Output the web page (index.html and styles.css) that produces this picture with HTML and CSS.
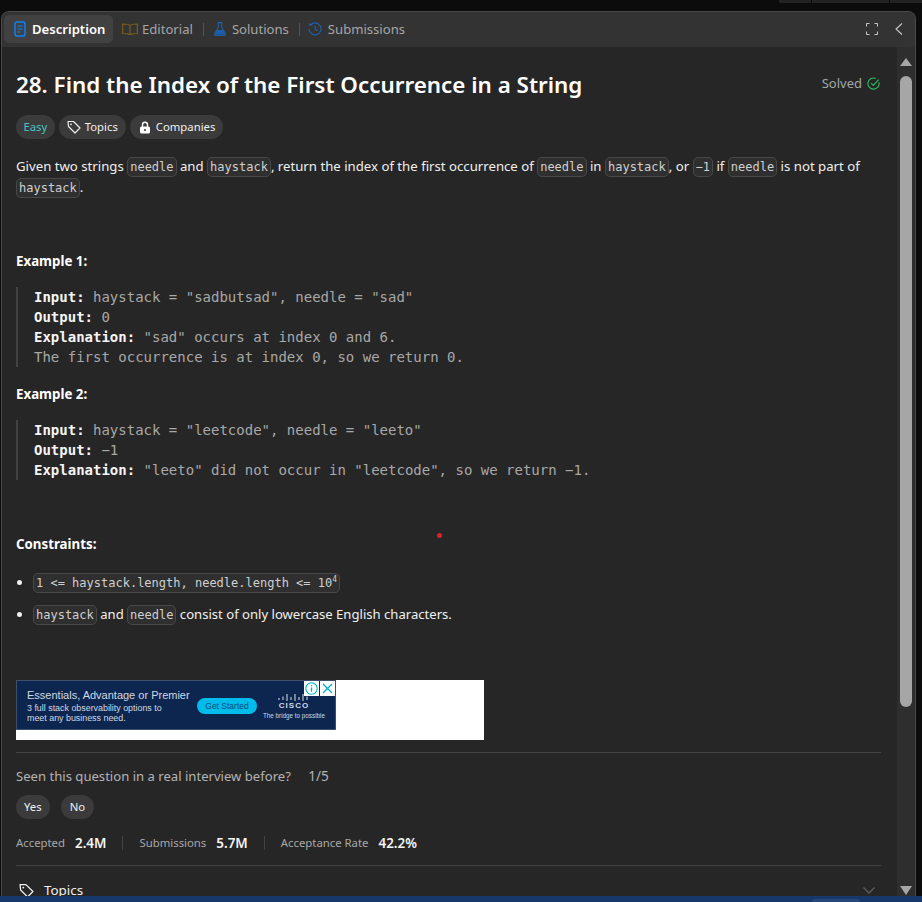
FILE: index.html
```html
<!DOCTYPE html>
<html lang="en">
<head>
    <meta charset="UTF-8">
    <meta name="viewport" content="width=device-width, initial-scale=1.0">
    <title>Find the Index of the First Occurrence in a String</title>
    <link rel="stylesheet" href="styles.css">
</head>
<body>
    <div class="top-strip"><i></i><i></i><i></i></div>
    <div class="panel">
        <div class="tabs">
            <div class="tab tab-active">
                <svg class="icon" viewBox="0 0 12 16" width="12" height="16"><rect x="1" y="1" width="10" height="14" rx="2" fill="none" stroke="#0a84ff" stroke-width="1.4"/><path d="M3.5 5h5M3.5 8h5M3.5 11h3" stroke="#0a84ff" stroke-width="1.2"/></svg>
                <span>Description</span>
            </div>
            <div class="tab tab-editorial">
                <svg class="icon" viewBox="0 0 16 12" width="16" height="12"><path d="M8 2.5C6.5 1.2 3.5 1 .7 1v9.5c2.8 0 5.8.2 7.3 1.2 1.5-1 4.5-1.200 7.300-1.200V1C12.500 1 9.500 1.200 8 2.500zM8 2.500v9" fill="none" stroke="#7a5f1a" stroke-width="1.2"/></svg>
                <span>Editorial</span>
            </div>
            <i class="tab-sep"></i>
            <div class="tab">
                <svg class="icon" viewBox="0 0 12 14" width="12" height="14"><path d="M3.500.7h5M4.300.7v4.500L.8 11.500c-.5 1 .1 1.900 1.200 1.900h8c1.100 0 1.700-.9 1.200-1.900L7.700 5.200V.7" fill="none" stroke="#1d5fa8" stroke-width="1.200"/><path d="M3 8h6l2 4.500H1z" fill="#1d5fa8"/></svg>
                <span>Solutions</span>
            </div>
            <i class="tab-sep"></i>
            <div class="tab tab-submissions">
                <svg class="icon" viewBox="0 0 14 14" width="14" height="14"><path d="M2.400 3A6 6 0 1 1 1 7M.9 1.200l1.300 2.200 2.300-.7M7.200 3.800v3.500l2.300 1.400" fill="none" stroke="#1d5fa8" stroke-width="1.200"/></svg>
                <span>Submissions</span>
            </div>
            <div class="tabs-right">
                <svg viewBox="0 0 12 12" width="12" height="12"><path d="M.5 3.500v-3h3M8.500.5h3v3M11.500 8.500v3h-3M3.500 11.500h-3v-3" fill="none" stroke="#c8c8c8" stroke-width="1"/></svg>
                <svg viewBox="0 0 8 12" width="8" height="12"><path d="M7 .5L1 6l6 5.500" fill="none" stroke="#c8c8c8" stroke-width="1.100"/></svg>
            </div>
        </div>

        <div class="main">
            <div class="content">
                <div class="title-row">
                    <h1>28. Find the Index of the First Occurrence in a String</h1>
                    <div class="solved">Solved
                        <svg viewBox="0 0 14 14" width="13" height="13"><path d="M12.800 5.500A6 6 0 1 1 9.500 1.600" fill="none" stroke="#2cbb5d" stroke-width="1.200"/><path d="M4.500 6.500L6.800 9 12.500 2.800" fill="none" stroke="#2cbb5d" stroke-width="1.200"/></svg>
                    </div>
                </div>

                <div class="tags">
                    <div class="tag tag-easy">Easy</div>
                    <div class="tag">
                        <svg viewBox="0 0 14 14" width="14" height="14"><path d="M1 1.500h5.500l6.500 6.500-5 5L1.500 6.500z" fill="none" stroke="#eee" stroke-width="1.200" stroke-linejoin="round"/><circle cx="4" cy="4.300" r=".9" fill="#eee"/></svg>
                        Topics
                    </div>
                    <div class="tag tag-companies">
                        <svg viewBox="0 0 12 13" width="12" height="13"><path d="M3.500 6V3.800a2.500 2.500 0 0 1 5 0V6" fill="none" stroke="#fff" stroke-width="1.400"/><rect x="1" y="5.500" width="10" height="7" rx="1.500" fill="#fff"/><circle cx="6" cy="9" r="1" fill="#333"/></svg>
                        Companies
                    </div>
                </div>

                <p class="text">Given two strings <code>needle</code> and <code>haystack</code>, return the index of the first occurrence of <code>needle</code> in <code>haystack</code>, or <code>&minus;1</code> if <code>needle</code> is not part of <code>haystack</code>.</p>

                <div class="label label-first">Example 1:</div>
                <pre class="example"><b>Input:</b> haystack = "sadbutsad", needle = "sad"
<b>Output:</b> 0
<b>Explanation:</b> "sad" occurs at index 0 and 6.
The first occurrence is at index 0, so we return 0.</pre>

                <div class="label">Example 2:</div>
                <pre class="example"><b>Input:</b> haystack = "leetcode", needle = "leeto"
<b>Output:</b> &minus;1
<b>Explanation:</b> "leeto" did not occur in "leetcode", so we return &minus;1.</pre>

                <div class="label label-constraints">Constraints:</div>
                <ul class="constraints">
                    <li><code>1 &lt;= haystack.length, needle.length &lt;= 10<sup>4</sup></code></li>
                    <li><code>haystack</code> and <code>needle</code> consist of only lowercase English characters.</li>
                </ul>

                <div class="ad-slot">
                    <div class="ad">
                        <div class="ad-copy">
                            <div class="ad-head">Essentials, Advantage or Premier</div>
                            <div class="ad-sub">3 full stack observability options to<br>meet any business need.</div>
                        </div>
                        <div class="ad-btn">Get Started</div>
                        <div class="ad-logo">
                            <svg viewBox="0 0 32 9" width="32" height="9"><path d="M1 5v2M5 3.500v3.500M9 1v7M13 4v3M17 1v7M21 4v3M25 1v7M29 3.500v3.500" stroke="#d8e0ea" stroke-width="1"/></svg>
                            <div class="ad-cisco">cisco</div>
                            <div class="ad-tagline">The bridge to possible</div>
                        </div>
                        <div class="ad-close">
                            <span><svg viewBox="0 0 15 15" width="15" height="15"><circle cx="7.500" cy="7.500" r="5.700" fill="none" stroke="#00aecd" stroke-width="1.100"/><path d="M7.500 6.500v4.200M7.500 4v1.300" stroke="#00aecd" stroke-width="1.300"/></svg></span>
                            <span><svg viewBox="0 0 15 15" width="15" height="15"><path d="M3 3l9 9M12 3l-9 9" stroke="#00aecd" stroke-width="1.300"/></svg></span>
                        </div>
                    </div>
                </div>

                <hr class="rule rule-ad">

                <div class="interview">Seen this question in a real interview before? <span>1/5</span></div>
                <div class="votes">
                    <div class="tag">Yes</div>
                    <div class="tag tag-no">No</div>
                </div>

                <div class="stats">
                    <div class="stat">Accepted <b>2.4M</b></div>
                    <div class="stat">Submissions <b>5.7M</b></div>
                    <div class="stat">Acceptance Rate <b>42.2%</b></div>
                </div>

                <hr class="rule rule-stats">

                <div class="section">
                    <svg viewBox="0 0 14 14" width="15" height="15"><path d="M1 1.500h5.500l6.500 6.500-5 5L1.500 6.500z" fill="none" stroke="#eee" stroke-width="1.200" stroke-linejoin="round"/><circle cx="4" cy="4.300" r=".9" fill="#eee"/></svg>
                    <span>Topics</span>
                    <svg class="chevron" viewBox="0 0 12 7" width="12" height="7"><path d="M.5.500L6 6l5.500-5.500" fill="none" stroke="#5c5c5c" stroke-width="1.300"/></svg>
                </div>
            </div>

            <div class="scrollbar">
                <i class="arrow-up"></i>
                <div class="thumb"></div>
                <i class="arrow-down"></i>
            </div>
        </div>
    </div>
    <div class="taskbar"><i></i></div>
    <i class="dot"></i>
</body>
</html>
```

FILE: styles.css
```css
body {
    background-color: #0c0c0c;
    margin: 0;
    height: 902px;
    overflow: hidden;
    position: relative;
    display: flex;
    flex-direction: column;
    font-family: "Noto Sans", "Open Sans", sans-serif;
    font-size: 13.100px;
    line-height: 22px;
    color: #f0f0f0;
}
.top-strip {
    position: absolute;
    top: 0;
    right: 0;
    display: flex;
    gap: 1px;
}
.top-strip i {
    width: 32px;
    height: 3px;
    background-color: #232323;
}
.top-strip i:nth-child(2) {
    width: 77px;
}
.panel {
    margin: 11px 6px 0 1px;
    height: 885px;
    box-sizing: border-box;
    background-color: #262626;
    border: 1px solid #4a4a4a;
    border-bottom: 0;
    border-radius: 8px 8px 0 0;
    display: flex;
    flex-direction: column;
    overflow: hidden;
}
.tabs {
    height: 35px;
    box-sizing: border-box;
    flex: none;
    background-color: #333333;
    display: flex;
    align-items: center;
    padding: 0 0 1px 2px;
    color: #a6a6a6;
}
.tab {
    height: 28px;
    display: flex;
    align-items: center;
    gap: 6px;
    padding: 0 10px;
    border-radius: 5px;
}
.tab svg {
    flex: none;
}
.tab-active {
    width: 109px;
    box-sizing: border-box;
    padding-right: 6px;
    background-color: #414141;
    color: #ffffff;
    font-weight: 600;
}
.tab-editorial {
    gap: 4px;
    padding-left: 9px;
}
.tab-submissions {
    padding-left: 8px;
}
.tab-sep {
    width: 1px;
    height: 13px;
    background-color: #555555;
}
.tabs-right {
    margin-left: auto;
    display: flex;
    align-items: center;
    gap: 17px;
    padding-right: 12px;
}
.main {
    flex: 1;
    display: flex;
    min-height: 0;
}
.content {
    flex: 1;
    min-width: 0;
    padding: 22px 16px 0 14px;
}
.title-row {
    display: flex;
    justify-content: space-between;
}
h1 {
    margin: 0;
    font-size: 22.400px;
    line-height: 32px;
    font-weight: 600;
    color: #ffffff;
}
.solved {
    display: flex;
    align-items: center;
    gap: 5px;
    height: 28px;
    margin-right: 1px;
    font-size: 13px;
    color: #a0a8a8;
}
.tags, .votes {
    display: flex;
    gap: 4px;
    margin-top: 14px;
}
.votes {
    gap: 11px;
    margin-top: 8px;
}
.tag {
    height: 24px;
    display: flex;
    align-items: center;
    gap: 4px;
    padding: 0 8px;
    border-radius: 12px;
    background-color: #3b3b3b;
    font-size: 11.300px;
    color: #f0f0f0;
}
.tag-easy {
    padding: 0 7.500px;
    color: #46c6c2;
}
.tag-companies {
    padding-left: 9px;
    gap: 5px;
}
.tag-no {
    padding: 0 9px;
}
.text {
    margin: 17px 0 0;
    font-size: 13.200px;
    line-height: 21px;
}
code {
    font-family: "DejaVu Sans Mono", monospace;
    font-size: 12px;
    line-height: 18px;
    padding: 2px 2px;
    border: 1px solid #484848;
    border-radius: 5px;
    background-color: #2f2f2f;
    color: #cfcfcf;
}
sup {
    font-size: 8px;
    line-height: 0;
}
.label {
    margin-top: 16px;
    font-weight: 700;
    font-size: 13.300px;
    color: #ffffff;
}
.label-first {
    margin-top: 52px;
}
.label-constraints {
    margin-top: 53px;
}
.example {
    margin: 15px 0 0;
    padding-left: 16px;
    border-left: 2px solid #424242;
    font-family: "DejaVu Sans Mono", monospace;
    font-size: 14px;
    line-height: 20px;
    color: #a8a8a8;
}
.example b {
    color: #f5f5f5;
}
.constraints {
    margin: 16px 0 0;
    padding-left: 17px;
}
.constraints li + li {
    margin-top: 10px;
}
.ad-slot {
    margin-top: 55px;
    width: 468px;
    height: 60px;
    background-color: #ffffff;
}
.ad {
    width: 320px;
    height: 50px;
    box-sizing: border-box;
    border: 1px solid #3c4f6b;
    background-color: #0d2650;
    position: relative;
    display: flex;
    align-items: center;
    font-family: "Liberation Sans", Arial, sans-serif;
    color: #d0d8e2;
}
.ad-copy {
    width: 170px;
    padding-left: 10px;
    flex: none;
}
.ad-head {
    font-size: 11px;
    line-height: 14px;
}
.ad-sub {
    font-size: 8.900px;
    line-height: 10px;
    margin-top: 1px;
}
.ad-btn {
    width: 60px;
    height: 16px;
    margin-top: 2px;
    border-radius: 8px;
    background-color: #00bceb;
    color: #0d4a80;
    font-size: 8.500px;
    line-height: 16px;
    text-align: center;
}
.ad-logo {
    margin-left: 5px;
    width: 64px;
    padding-top: 3px;
    text-align: center;
    line-height: 8px;
}
.ad-logo svg {
    display: block;
    margin: 0 auto;
}
.ad-cisco {
    font-size: 8px;
    font-weight: 700;
    letter-spacing: 1px;
    text-transform: uppercase;
}
.ad-tagline {
    font-size: 6.300px;
    margin-top: 2px;
    white-space: nowrap;
}
.ad-close {
    position: absolute;
    top: 0;
    right: 0;
    display: flex;
    gap: 1px;
}
.ad-close span {
    width: 15px;
    height: 15px;
    display: block;
    background-color: #ffffff;
}
.ad-close svg {
    display: block;
}
.rule {
    margin: 12px 0 0;
    border: 0;
    height: 1px;
    background-color: #424242;
}
.rule-stats {
    margin-top: 11px;
}
.interview {
    margin-top: 12px;
    color: #b4b4b4;
}
.interview span {
    margin-left: 14px;
    font-size: 13.600px;
}
.stats {
    margin-top: 13px;
    display: flex;
    font-size: 11.350px;
    color: #a8a8a8;
}
.stat {
    display: flex;
    align-items: center;
    gap: 10px;
    padding-right: 16px;
    margin-right: 16px;
}
.stat:not(:last-child) {
    border-right: 1px solid #424242;
    height: 14px;
    margin-top: 4px;
}
.stat b {
    font-size: 13.400px;
    font-weight: 600;
    color: #f5f5f5;
}
.section {
    margin-top: 13px;
    display: flex;
    align-items: center;
    gap: 10px;
    padding-left: 3px;
    font-size: 13.400px;
    color: #f0f0f0;
}
.chevron {
    margin-left: auto;
    margin-right: 6px;
}
.scrollbar {
    width: 18px;
    flex: none;
    background-color: #2e2e2e;
    display: flex;
    flex-direction: column;
    align-items: center;
    padding-top: 11px;
    box-sizing: border-box;
}
.arrow-up {
    width: 0;
    height: 0;
    border-left: 6px solid transparent;
    border-right: 6px solid transparent;
    border-bottom: 8px solid #a6a6a6;
}
.thumb {
    width: 12px;
    height: 631px;
    margin-top: 10px;
    border-radius: 6px;
    background-color: #a6a6a6;
}
.arrow-down {
    margin-top: auto;
    margin-bottom: 1px;
    width: 0;
    height: 0;
    border-left: 6px solid transparent;
    border-right: 6px solid transparent;
    border-top: 9px solid #a6a6a6;
}
.taskbar {
    flex: 1;
    background-color: #16386b;
    display: flex;
    justify-content: flex-end;
    align-items: flex-end;
    padding-right: 62px;
}
.taskbar i {
    width: 48px;
    height: 3px;
    border-radius: 3px 3px 0 0;
    background-color: #25477a;
}
.dot {
    position: absolute;
    left: 437px;
    top: 533px;
    width: 5px;
    height: 5px;
    border-radius: 50%;
    background-color: #e0202a;
}
```
